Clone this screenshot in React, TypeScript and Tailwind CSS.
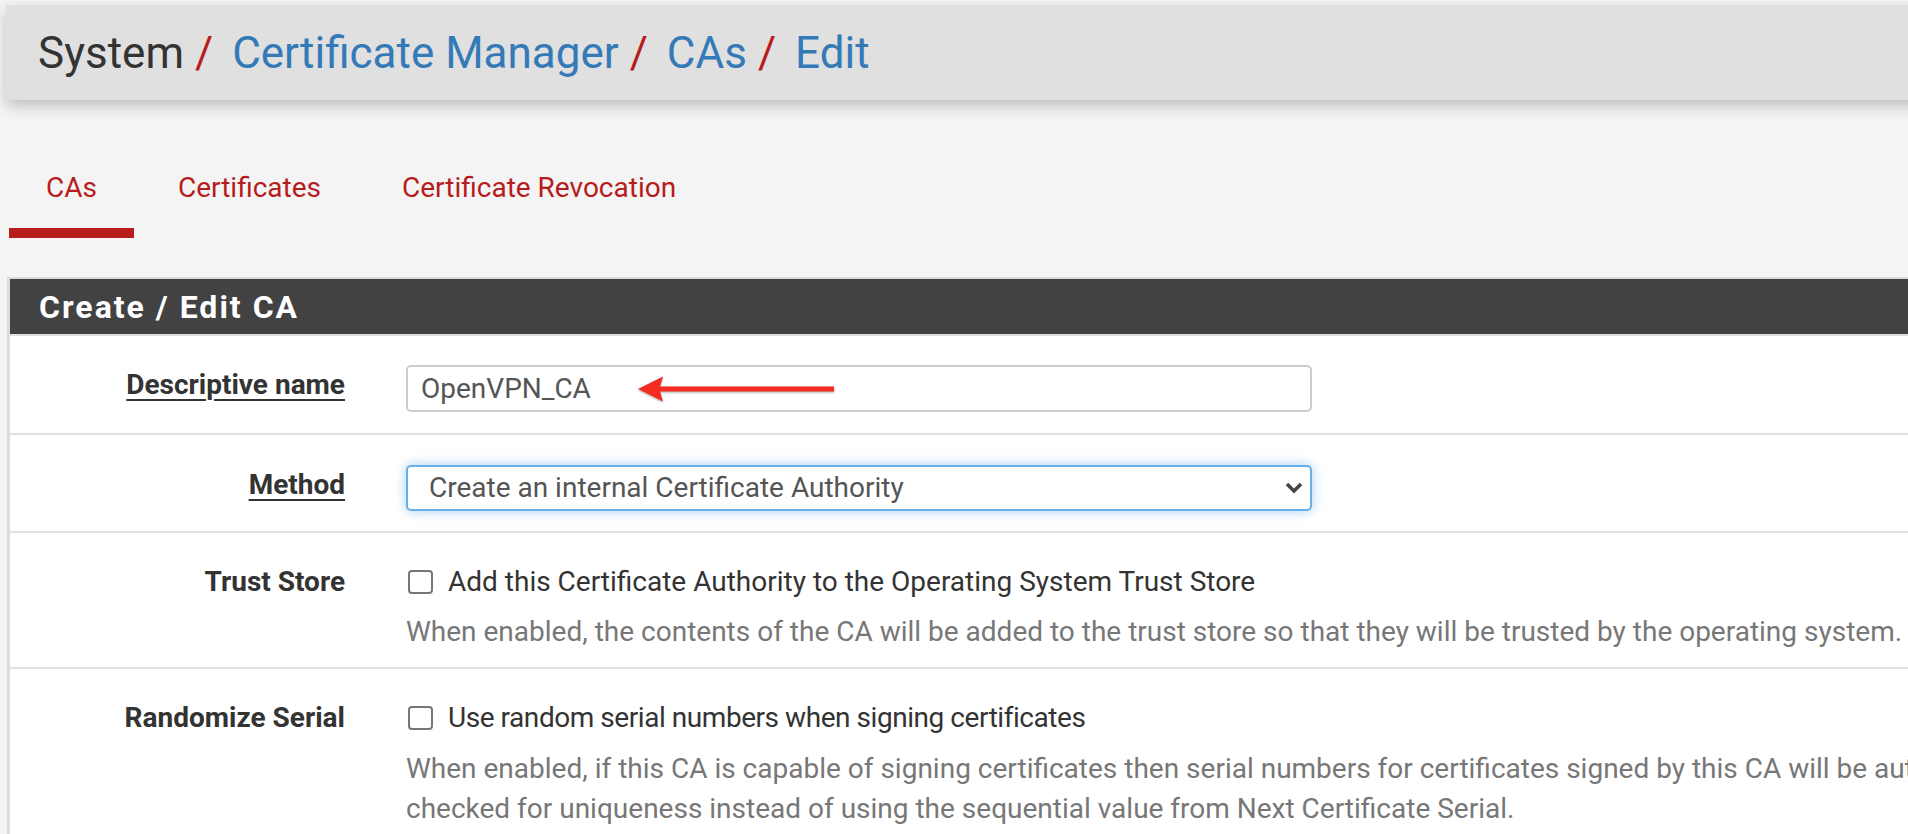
import { ReactNode } from "react";

const Slash = () => (
  <span className="ml-[11px] mr-[19px] text-[#b71c1c]">/</span>
);

const tabs = [
  { name: "CAs", active: true },
  { name: "Certificates", active: false },
  { name: "Certificate Revocation", active: false },
];

const Row = ({
  label,
  required,
  children,
  className,
}: {
  label: string;
  required?: boolean;
  children: ReactNode;
  className: string;
}) => (
  <div className={`flex border-b-2 border-[#e0e0e0] ${className}`}>
    <div className="w-[335px] shrink-0 text-right text-[28px] font-bold leading-[40px] text-[#333]">
      <span
        className={
          required ? "underline decoration-2 underline-offset-[5px]" : ""
        }
      >
        {label}
      </span>
    </div>
    <div className="ml-[61px]">{children}</div>
  </div>
);

const Checkbox = ({ text, tight }: { text: string; tight?: boolean }) => (
  <label className="ml-[2px] flex h-[40px] items-center gap-[15px] text-[28px] text-[#333]">
    <span className="h-[24px] w-[25px] rounded-[4px] border-2 border-[#767676] bg-white" />
    <span className={tight ? "tracking-[-0.45px]" : ""}>{text}</span>
  </label>
);

const App = () => {
  return (
    <div className="h-screen w-full overflow-hidden bg-[#f4f4f4] font-[Roboto,sans-serif] text-[#333]">
      <div className="w-[2300px] pl-[6px] pt-[5px]">
        {/* breadcrumb */}
        <div className="flex h-[95px] items-center bg-[#e0e0e0] pl-[32px] text-[44px] shadow-[0_6px_14px_rgba(0,0,0,0.22)]">
          <span>System</span>
          <Slash />
          <a className="text-[#337ab7]">Certificate Manager</a>
          <Slash />
          <a className="text-[#337ab7]">CAs</a>
          <Slash />
          <a className="text-[#337ab7]">Edit</a>
        </div>

        {/* tabs */}
        <ul className="mt-[68px] flex gap-[7px] pl-[3px]">
          {tabs.map((tab) => (
            <li
              key={tab.name}
              className={`border-b-[10px] px-[37px] pb-[20px] text-[28px] leading-[40px] text-[#b71c1c] ${
                tab.active ? "border-[#b71c1c]" : "border-transparent"
              }`}
            >
              {tab.name}
            </li>
          ))}
        </ul>

        {/* panel */}
        <div className="ml-[1px] mt-[39px] border-l-[3px] border-t-2 border-[#dcdcdc] bg-white">
          <div className="flex h-[57px] items-center border-b-2 border-[#e0e0e0] bg-[#424242] pl-[29px] text-[32px] font-bold tracking-[2px] text-white">
            Create / Edit CA
          </div>

          <Row label="Descriptive name" required className="pb-[21px] pt-[29px]">
            <div className="relative">
              <input
                type="text"
                defaultValue="OpenVPN_CA"
                className="h-[47px] w-[906px] rounded-[5px] border-2 border-[#cccccc] bg-white px-[13px] text-[28px] text-[#555] outline-none"
              />
              <svg
                className="absolute left-[228px] top-[10px] drop-shadow-[0_1px_1px_rgba(0,0,0,0.35)]"
                width="204"
                height="30"
                viewBox="0 0 204 30"
              >
                <path
                  d="M4 14 L29 1.5 L26 11.5 L200 11.5 L200 16.5 L26 16.5 L29 26.5 Z"
                  fill="#f42b1f"
                />
              </svg>
            </div>
          </Row>

          <Row label="Method" required className="pb-[20px] pt-[30px]">
            <div className="relative">
              <select className="h-[46px] w-[906px] appearance-none rounded-[5px] border-2 border-[#66afe9] bg-white pl-[21px] text-[28px] text-[#555] shadow-[0_0_12px_rgba(102,175,233,0.6)] outline-none">
                <option>Create an internal Certificate Authority</option>
              </select>
              <svg
                className="pointer-events-none absolute right-[9px] top-1/2 -translate-y-1/2"
                width="18"
                height="12"
                viewBox="0 0 18 12"
              >
                <polyline
                  points="2,2 9,9 16,2"
                  fill="none"
                  stroke="#444"
                  strokeWidth="3.5"
                />
              </svg>
            </div>
          </Row>

          <Row label="Trust Store" className="pb-[15px] pt-[29px]">
            <Checkbox text="Add this Certificate Authority to the Operating System Trust Store" />
            <p className="mt-[10px] whitespace-nowrap text-[28px] leading-[40px] text-[#777]">
              When enabled, the contents of the CA will be added to the trust store so that they will be trusted by the operating system.
            </p>
          </Row>

          <Row label="Randomize Serial" className="pb-[15px] pt-[29px]">
            <Checkbox text="Use random serial numbers when signing certificates" tight />
            <p className="mt-[11px] whitespace-nowrap text-[28px] leading-[40px] text-[#777]">
              When enabled, if this CA is capable of signing certificates then serial numbers for certificates signed by this CA will be automatically randomized and
              <br />
              checked for uniqueness instead of using the sequential value from Next Certificate Serial.
            </p>
          </Row>
        </div>
      </div>
    </div>
  );
};

export default App;
